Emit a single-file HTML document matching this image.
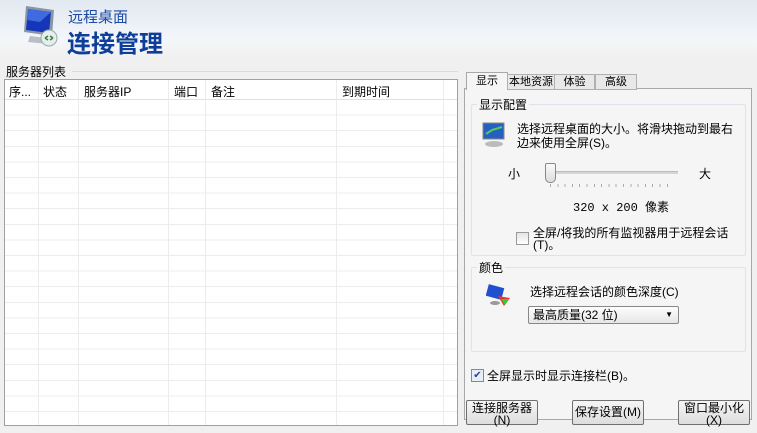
<html><head><style>
body{margin:0;width:757px;height:433px;overflow:hidden;background:#f0f0f0;font-family:"Liberation Sans","Noto Sans CJK SC",sans-serif;font-size:12px;color:#000;position:relative}
.a{position:absolute}
.hdr{left:0;top:0;width:757px;height:58px;background:linear-gradient(#e2e9f1,#f4f6f9 70%,#f0f0f0)}
.tbl{left:4px;top:79px;width:452px;height:345px;border:1px solid #a0a0a0;background:#fff;
background-image:repeating-linear-gradient(to bottom,transparent 0,transparent 14.6px,#ececec 14.6px,#ececec 15.6px);background-position:0 20px}
.th{top:0;height:19px;background:#fff;border-bottom:1px solid #e0e0e0;width:452px;left:0}
.cl{top:0;bottom:0;width:1px;background:#ececec}
.ht{top:3px;font-size:12px}
.btn{height:25px;border:1px solid #707070;border-radius:2px;background:linear-gradient(#f6f6f6,#dddddd);font-size:12px;text-align:center;line-height:12px;box-sizing:border-box}
</style></head><body>
<div class="a hdr"></div>
<svg class="a" style="left:20px;top:4px" width="40" height="46" viewBox="0 0 40 46">
<path d="M6 2 L34 6 L32 32 L4 28 Z" fill="#8a96a8"/>
<path d="M8 5 L31 8 L29 29 L6 26 Z" fill="#1436b8"/>
<path d="M8 5 L31 8 L20 18 L7 16Z" fill="#3f6ae0"/>
<path d="M10 32 L26 34 L28 40 L8 38Z" fill="#b8bec8"/>
<circle cx="29" cy="34" r="8" fill="#e8ecef" stroke="#9aa" stroke-width="1"/>
<path d="M25 34 l3 -2 M25 34 l3 2 M33 34 l-3 -2 M33 34 l-3 2" stroke="#2a8a2a" stroke-width="1.5"/>
</svg>
<div class="a" style="left:68px;top:6px;font-size:15px;color:#1b4aa6">远程桌面</div>
<div class="a" style="left:67px;top:24px;font-size:24px;font-weight:bold;color:#0d3e9a">连接管理</div>
<div class="a" style="left:6px;top:63px;font-size:12px">服务器列表</div>
<div class="a" style="left:72px;top:71px;width:386px;height:1px;background:#d8dde2"></div>
<div class="a tbl">
<div class="a th"></div>
<div class="a cl" style="left:33px"></div><div class="a cl" style="left:73px"></div><div class="a cl" style="left:163px"></div><div class="a cl" style="left:200px"></div><div class="a cl" style="left:331px"></div><div class="a cl" style="left:438px"></div>
<div class="a ht" style="left:4px">序...</div><div class="a ht" style="left:38px">状态</div><div class="a ht" style="left:79px">服务器IP</div><div class="a ht" style="left:169px">端口</div><div class="a ht" style="left:206px">备注</div><div class="a ht" style="left:337px">到期时间</div>
</div>
<div class="a" style="left:464px;top:88px;width:288px;height:332px;border:1px solid #a8a8a8;box-sizing:border-box;background:#f5f5f5"></div>
<div class="a" style="left:466px;top:72px;width:40px;height:17px;border:1px solid #a8a8a8;border-bottom:none;background:#f5f5f5;text-align:center;line-height:16px;font-size:11px">显示</div>
<div class="a" style="left:507px;top:74px;width:46px;height:14px;border:1px solid #b0b0b0;background:#e8e8e8;text-align:center;line-height:14px;font-size:11px">本地资源</div>
<div class="a" style="left:554px;top:74px;width:39px;height:14px;border:1px solid #b0b0b0;background:#e8e8e8;text-align:center;line-height:14px;font-size:11px">体验</div>
<div class="a" style="left:595px;top:74px;width:40px;height:14px;border:1px solid #b0b0b0;background:#e8e8e8;text-align:center;line-height:14px;font-size:11px">高级</div>
<div class="a" style="left:471px;top:104px;width:273px;height:150px;border:1px solid #dde3e8;border-radius:2px"></div>
<div class="a" style="left:477px;top:96px;background:#f5f5f5;padding:0 2px">显示配置</div>
<svg class="a" style="left:482px;top:122px" width="24" height="26"><rect x="1" y="1" width="21" height="16" fill="#2560c0" stroke="#888"/><path d="M4 12 L10 8 L20 5" stroke="#5c5" stroke-width="2" fill="none"/><ellipse cx="12" cy="22" rx="9" ry="3" fill="#bbb"/></svg>
<div class="a" style="left:517px;top:122px;width:226px;line-height:14px">选择远程桌面的大小。将滑块拖动到最右边来使用全屏(S)。</div>
<div class="a" style="left:508px;top:165px">小</div>
<div class="a" style="left:699px;top:165px">大</div>
<div class="a" style="left:545px;top:171px;width:133px;height:2px;background:#d6d6d6;border-top:1px solid #bbb"></div>
<div class="a" style="left:545px;top:163px;width:9px;height:18px;border:1px solid #888;border-radius:2px 2px 5px 5px;background:linear-gradient(#fafafa,#ddd)"></div>
<div class="a" style="left:550px;top:184px;width:124px;height:3px;background:repeating-linear-gradient(to right,#aaa 0,#aaa 1px,transparent 1px,transparent 7.3px)"></div>
<div class="a" style="left:573px;top:198px;font-family:'Liberation Mono','Noto Sans CJK SC',monospace;font-size:12px">320 x 200 像素</div>
<div class="a" style="left:516px;top:232px;width:11px;height:11px;border:1px solid #999;background:linear-gradient(#e4e4e4,#fff)"></div>
<div class="a" style="left:533px;top:227px;width:212px;line-height:12px">全屏/将我的所有监视器用于远程会话(T)。</div>
<div class="a" style="left:471px;top:267px;width:273px;height:83px;border:1px solid #dde3e8;border-radius:2px"></div>
<div class="a" style="left:477px;top:259px;background:#f5f5f5;padding:0 2px">颜色</div>
<svg class="a" style="left:486px;top:284px" width="26" height="24"><rect x="1" y="2" width="16" height="12" fill="#2050d0" transform="rotate(15 9 8)"/><path d="M12 12 L24 14 L18 22Z" fill="#e33"/><path d="M15 15 L23 15 L19 21Z" fill="#3c3"/><ellipse cx="9" cy="19" rx="5" ry="2" fill="#999"/></svg>
<div class="a" style="left:530px;top:283px">选择远程会话的颜色深度(C)</div>
<div class="a" style="left:528px;top:306px;width:151px;height:18px;border:1px solid #888;border-radius:2px;background:linear-gradient(#fdfdfd,#e6e6e6);box-sizing:border-box;line-height:16px;padding-left:4px">最高质量(32 位)<span style="position:absolute;right:5px;top:0;font-size:8px">▼</span></div>
<div class="a" style="left:471px;top:369px;width:11px;height:11px;border:1px solid #888;background:#e8eef6;font-size:10px;line-height:11px;text-align:center;color:#2540a0">✔</div>
<div class="a" style="left:487px;top:367px">全屏显示时显示连接栏(B)。</div>
<div class="a btn" style="left:466px;top:400px;width:72px;padding-top:1px">连接服务器<br>(N)</div>
<div class="a btn" style="left:572px;top:400px;width:72px;line-height:22px">保存设置(M)</div>
<div class="a btn" style="left:678px;top:400px;width:72px;padding-top:1px">窗口最小化<br>(X)</div>
</body></html>
